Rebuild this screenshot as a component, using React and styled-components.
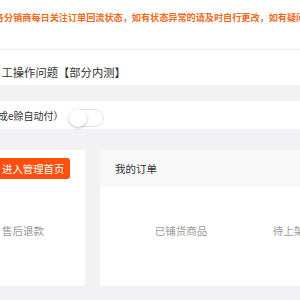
import React, { useState } from "react";
import styled, { createGlobalStyle } from "styled-components";

const GlobalStyle = createGlobalStyle`
  html, body {
    margin: 0;
    padding: 0;
    background: #f2f2f5;
    font-family: "Noto Sans CJK SC", "Noto Sans", sans-serif;
  }
`;

const Page = styled.div`
  width: 300px;
  height: 300px;
  overflow: hidden;
  background: #f2f2f5;
  display: flex;
  flex-direction: column;
`;

const Notice = styled.div`
  height: 50px;
  flex-shrink: 0;
  background: #fff;
  border-bottom: 1px solid #ececec;
  padding-top: 11px;
  box-sizing: border-box;
  white-space: nowrap;
  font-size: 9.15px;
  line-height: 12px;
  font-weight: 700;
  color: #ef6a1c;
  margin-left: -5.1px;
`;

const TitleBar = styled.div`
  height: 35px;
  flex-shrink: 0;
  background: #fff;
  padding: 14px 0 0 1.5px;
  box-sizing: border-box;
  font-size: 11.3px;
  line-height: 16px;
  color: #333;
  white-space: nowrap;
`;

const Band = styled.div`
  height: ${(p) => p.$h}px;
  flex-shrink: 0;
`;

const SettingRow = styled.div`
  height: 28px;
  flex-shrink: 0;
  background: #fff;
  display: flex;
  align-items: center;
  gap: 5px;
  margin-left: -2px;
  font-size: 10px;
  color: #333;
  white-space: nowrap;
`;

const Track = styled.button`
  position: relative;
  width: 35px;
  height: 18px;
  padding: 0;
  border: 1px solid #e3e3e6;
  border-radius: 9px;
  background: ${(p) => (p.$on ? "#ff5000" : "#fff")};
  cursor: pointer;
  align-self: flex-start;
  margin-top: 8px;
`;

const Knob = styled.span`
  position: absolute;
  top: -1px;
  left: ${(p) => (p.$on ? "16px" : "-1px")};
  width: 18px;
  height: 18px;
  border-radius: 50%;
  background: #fff;
  box-shadow: 0 1px 3px rgba(0, 0, 0, 0.25);
`;

const Cards = styled.div`
  height: 136px;
  flex-shrink: 0;
  display: flex;
  gap: 15px;
`;

const Card = styled.div`
  width: ${(p) => p.$w}px;
  flex-shrink: 0;
  background: #fff;
  display: flex;
  flex-direction: column;
`;

const PrimaryButton = styled.button`
  align-self: flex-start;
  margin: 8px 0 0 -6px;
  height: 21px;
  padding: 0 6px 0 8px;
  border: none;
  border-radius: 3px;
  background: #ff4f0e;
  color: #fff;
  font-family: inherit;
  font-size: 10.4px;
  white-space: nowrap;
`;

const CardHeader = styled.div`
  height: 37px;
  background: #f8f8f9;
  display: flex;
  align-items: center;
  justify-content: space-between;
  padding-left: 15px;
  font-size: 10.5px;
  color: #333;
  white-space: nowrap;
`;

const RangeSelect = styled.div`
  width: 60px;
  height: 23px;
  margin-right: -52px;
  margin-top: 4px;
  box-sizing: border-box;
  border: 1px solid #e4e4e4;
  border-radius: 2px;
  background: #fff;
  font-size: 10px;
  line-height: 21px;
  color: #666;
  padding-left: 5px;
`;

const StatRow = styled.div`
  display: flex;
  padding-top: ${(p) => p.$top}px;
  padding-left: ${(p) => p.$left}px;
`;

const Stat = styled.div`
  width: ${(p) => (p.$w ? `${p.$w}px` : "auto")};
  flex-shrink: 0;
  text-align: ${(p) => (p.$w ? "center" : "left")};
  font-size: 10.5px;
  line-height: 14px;
  color: #999;
  white-space: nowrap;
`;

export default function App() {
  const [autoPay, setAutoPay] = useState(false);

  return (
    <Page>
      <GlobalStyle />
      <Notice>
        各分销商每日关注订单回流状态，如有状态异常的请及时自行更改，如有疑问请联系客服
      </Notice>
      <TitleBar>工操作问题【部分内测】</TitleBar>
      <Band $h={16} />
      <SettingRow>
        <span>成e赊自动付）</span>
        <Track $on={autoPay} onClick={() => setAutoPay(!autoPay)}>
          <Knob $on={autoPay} />
        </Track>
      </SettingRow>
      <Band $h={21} />
      <Cards>
        <Card $w={85}>
          <PrimaryButton>进入管理首页</PrimaryButton>
          <StatRow $top={45} $left={2}>
            <Stat>售后退款</Stat>
          </StatRow>
        </Card>
        <Card $w={215}>
          <CardHeader>
            我的订单
            <RangeSelect>近7天</RangeSelect>
          </CardHeader>
          <StatRow $top={37} $left={22}>
            <Stat $w={118}>已铺货商品</Stat>
            <Stat $w={118}>待上架商品</Stat>
          </StatRow>
        </Card>
      </Cards>
      <Band $h={13} />
    </Page>
  );
}
